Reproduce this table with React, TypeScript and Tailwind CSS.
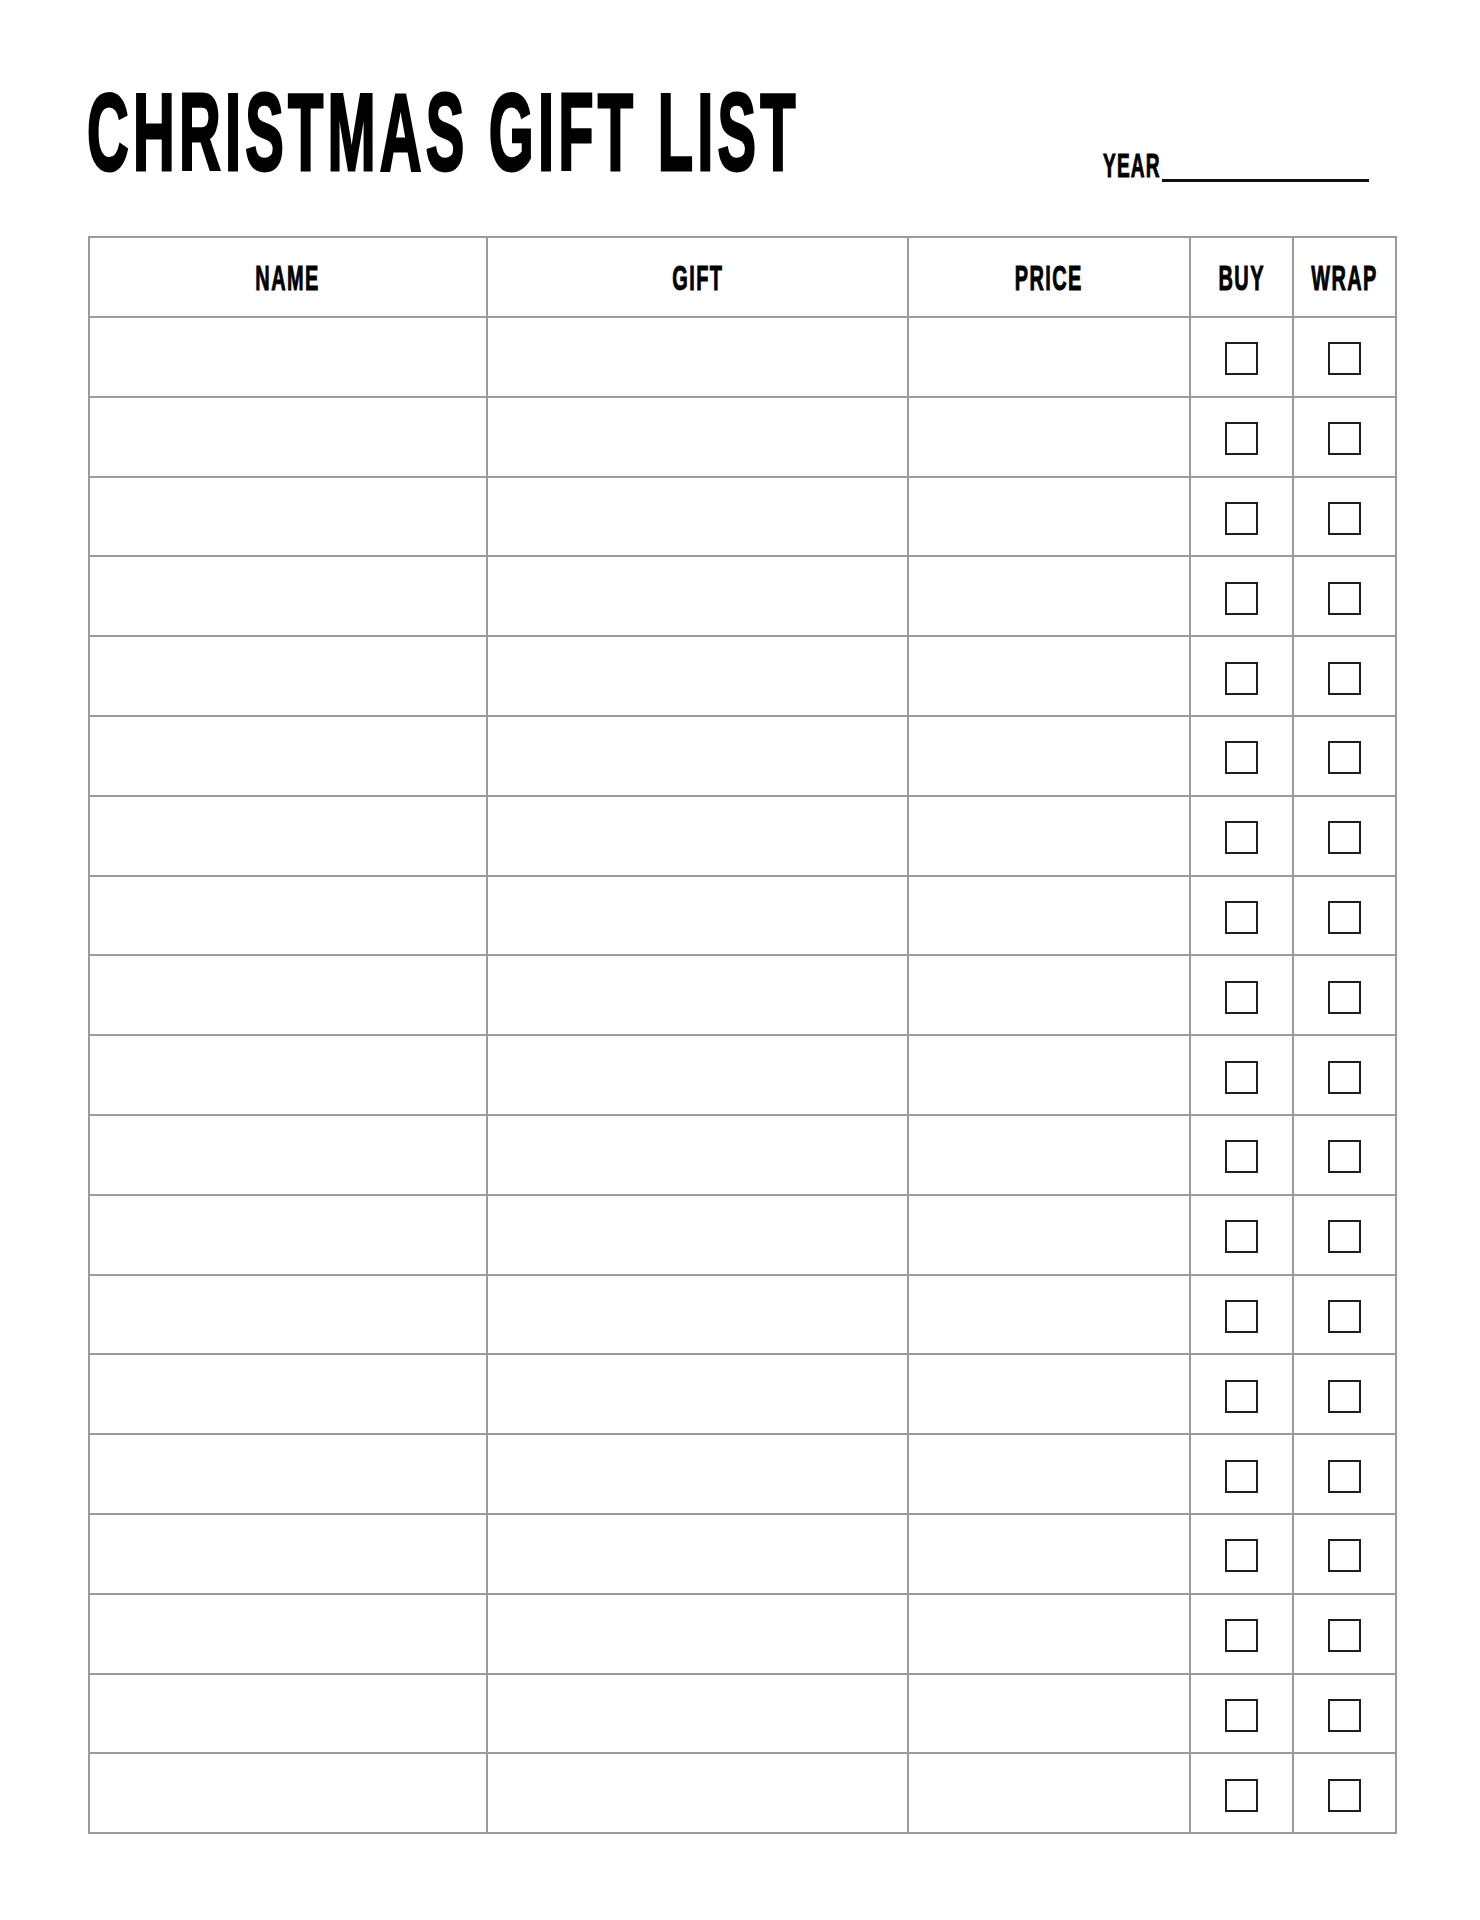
import React from "react";

const cols = ["w-[398px]", "w-[421px]", "w-[282px]", "w-[103px]", "w-[103px]"];
const heads = ["NAME", "GIFT", "PRICE", "BUY", "WRAP"];

function Box() {
  return <div className="w-[33px] h-[33px] border-[2.5px] border-[#1e1e1e] mt-[4px]" />;
}

export default function App() {
  const rows = Array.from({ length: 19 }, (_, i) => i);
  return (
    <div className="w-[1480px] h-[1920px] bg-white pl-[87px] pt-[78px] font-['Liberation_Sans',Arial,sans-serif] text-black">
      <div className="flex h-[158px] w-[1309px]">
        <div className="w-[1016px] h-[109px]">
          <div className="text-[109px] leading-none font-bold whitespace-nowrap tracking-[8px] scale-x-[0.53] origin-left [-webkit-text-stroke:3px_black]">
            CHRISTMAS GIFT LIST
          </div>
        </div>
        <div className="flex items-start mt-[71px]">
          <div className="w-[59px] h-[34px]">
            <div className="text-[33.5px] leading-none font-bold whitespace-nowrap tracking-[2px] scale-x-[0.57] origin-left [-webkit-text-stroke:1px_black]">
              YEAR
            </div>
          </div>
          <div className="w-[207px] h-[33px] border-b-[3px] border-[#111]" />
        </div>
      </div>
      <div className="ml-[1px] w-[1309px] border-t-2 border-l-2 border-[#9b9b9b]">
        <div className="flex">
          {heads.map((h, i) => (
            <div
              key={h}
              className={`${cols[i]} h-[80px] border-r-2 border-b-2 border-[#9b9b9b] flex items-center justify-center`}
            >
              <span className="inline-block text-[35px] leading-none font-bold scale-x-[0.57] tracking-[2.5px] whitespace-nowrap [-webkit-text-stroke:1px_black]">
                {h}
              </span>
            </div>
          ))}
        </div>
        {rows.map((r) => (
          <div key={r} className="flex">
            {cols.map((c, i) => (
              <div
                key={i}
                className={`${c} h-[79.8px] border-r-2 border-b-2 border-[#9b9b9b] flex items-center justify-center`}
              >
                {i >= 3 ? <Box /> : null}
              </div>
            ))}
          </div>
        ))}
      </div>
    </div>
  );
}
